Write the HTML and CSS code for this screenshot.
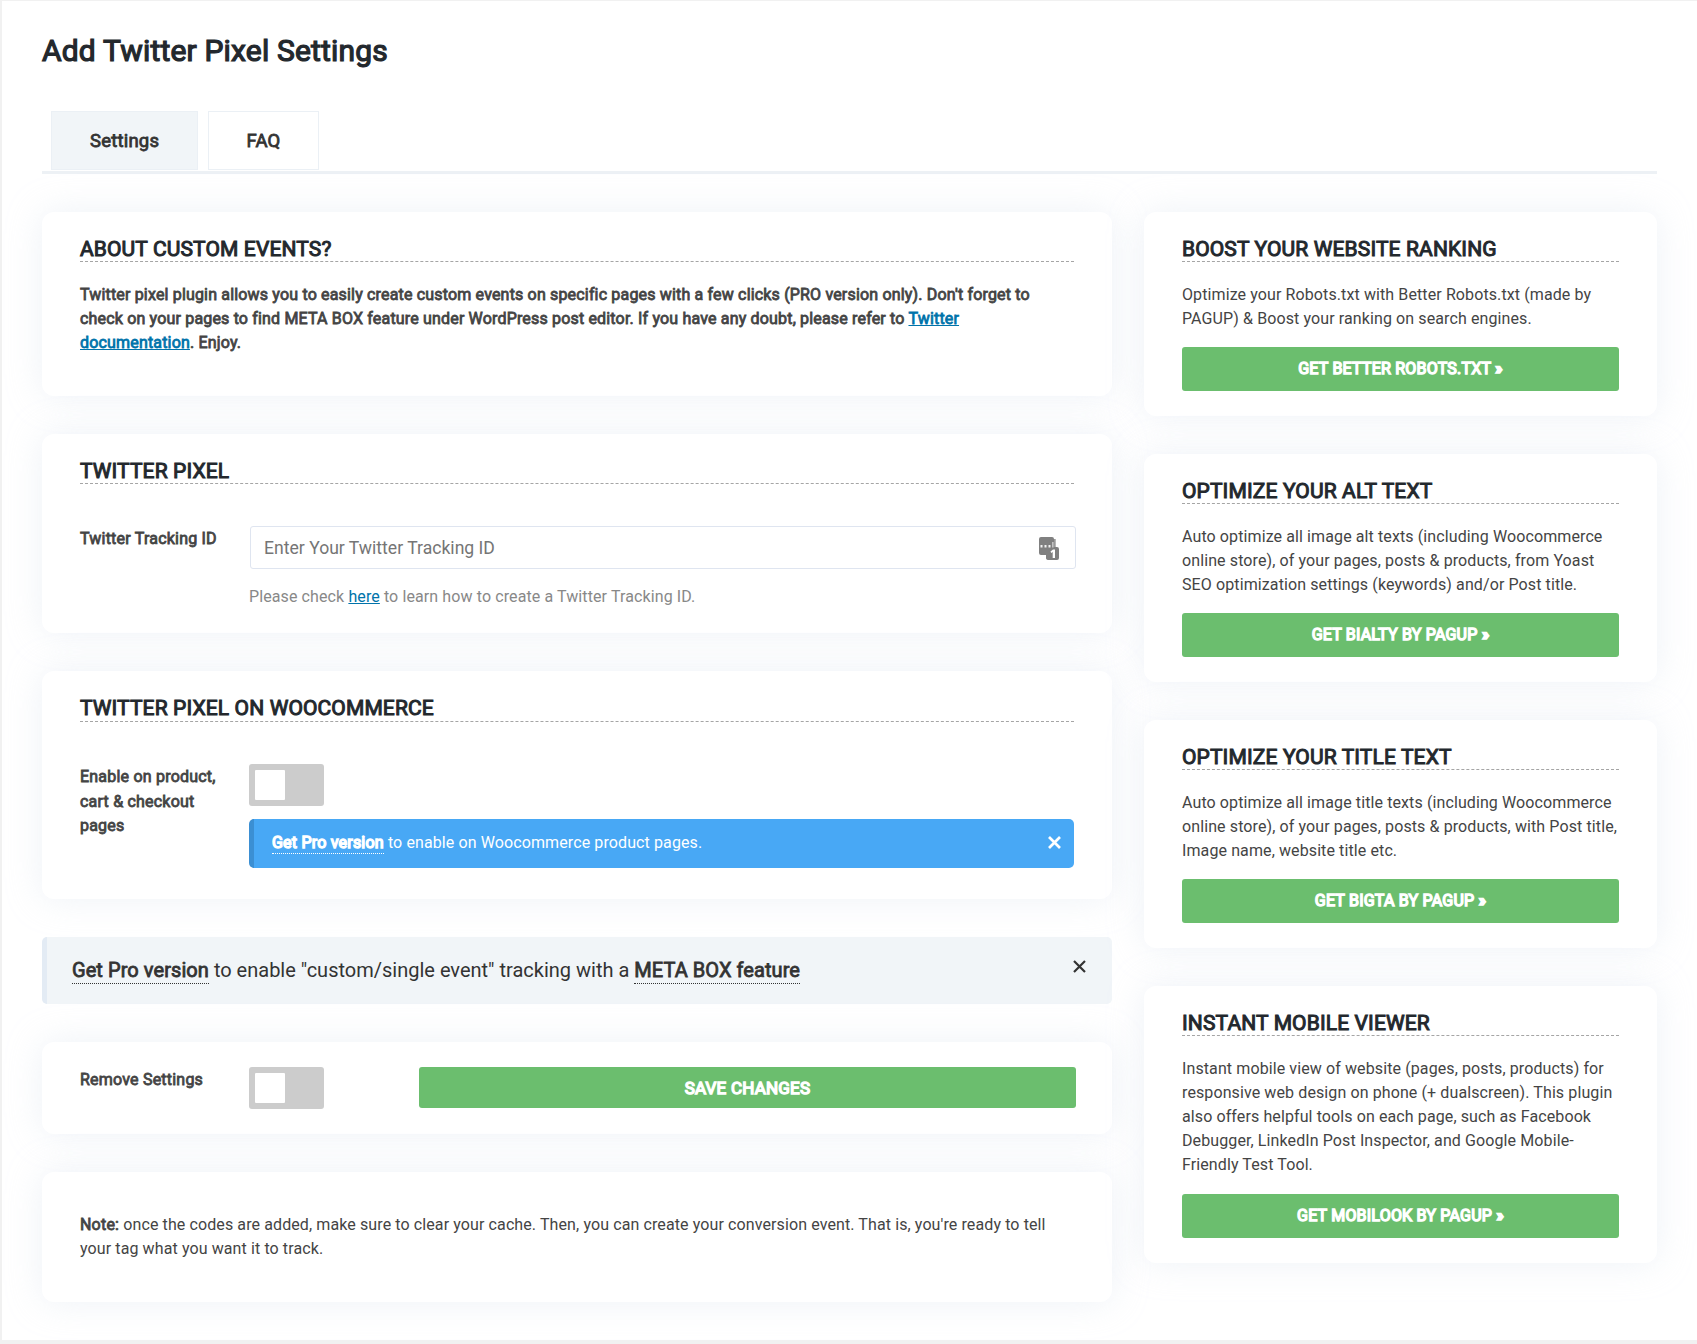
FILE: index.html
```html
<!DOCTYPE html>
<html lang="en">
<head>
<meta charset="utf-8">
<title>Add Twitter Pixel Settings</title>
<link rel="stylesheet" href="styles.css">
</head>
<body>
<div class="page">
  <h1 class="title bold">Add Twitter Pixel Settings</h1>
  <nav class="tabs">
    <a class="tab tab-active bold">Settings</a>
    <a class="tab tab-faq bold">FAQ</a>
  </nav>
  <div class="layout">
    <main class="main">
      <section class="card card-about">
        <h2 class="heading bold">About custom events?</h2>
        <p class="text text-about bold">Twitter pixel plugin allows you to easily create custom events on specific pages with a few clicks (PRO version only). Don't forget to check on your pages to find META BOX feature under WordPress post editor. If you have any doubt, please refer to <a class="link">Twitter documentation</a>. Enjoy.</p>
      </section>

      <section class="card card-pixel">
        <h2 class="heading bold">Twitter Pixel</h2>
        <div class="row row-pixel">
          <label class="label bold">Twitter Tracking ID</label>
          <div class="field">
            <div class="input">
              <span class="placeholder">Enter Your Twitter Tracking ID</span>
              <svg class="manager" width="20" height="24" viewBox="0 0 20 24">
                <path d="M2 0H13Q15 0 15 2V10H18Q20 10 20 12V21Q20 23 18 23H10Q7 23 7 21V18H2Q0 18 0 16V2Q0 0 2 0Z" fill="#808080"/>
                <path d="M1.500 8h2v2.500h-2zM5.500 8h2v2.500h-2zM9.500 8h2v2.500h-2z" fill="#f2f2f2"/>
                <path d="M13.200 5h1.300v5.500h-1.300z" fill="#d5d5d5"/>
                <path d="M15 2h1.700v8h-1.700z" fill="#999"/>
                <path d="M11.500 14.500L14 12.500H16V21H13.700V15L12.200 16Z" fill="#fff"/>
              </svg>
            </div>
            <p class="help">Please check <a class="link">here</a> to learn how to create a Twitter Tracking ID.</p>
          </div>
        </div>
      </section>

      <section class="card card-woo">
        <h2 class="heading bold">Twitter Pixel on Woocommerce</h2>
        <div class="row row-woo">
          <label class="label label-wrap bold">Enable on product, cart &amp; checkout pages</label>
          <div class="field">
            <span class="toggle"><span class="knob"></span></span>
            <div class="alert">
              <span><a class="pro heavy">Get Pro version</a> to enable on Woocommerce product pages.</span>
              <svg class="close" width="13" height="13" viewBox="0 0 13 13"><path d="M1 1L12 12M12 1L1 12" stroke="#fff" stroke-width="2.700"/></svg>
            </div>
          </div>
        </div>
      </section>

      <div class="notice">
        <span><a class="pro bold">Get Pro version</a> to enable "custom/single event" tracking with a <a class="pro bold">META BOX feature</a></span>
        <svg class="close-dark" width="13" height="13" viewBox="0 0 13 13"><path d="M1 1L12 12M12 1L1 12" stroke="#333" stroke-width="2.200"/></svg>
      </div>

      <section class="card card-save">
        <label class="label bold">Remove Settings</label>
        <span class="toggle"><span class="knob"></span></span>
        <button class="button save heavy">Save Changes</button>
      </section>

      <section class="card card-note">
        <p class="text"><b class="bold">Note:</b> once the codes are added, make sure to clear your cache. Then, you can create your conversion event. That is, you're ready to tell your tag what you want it to track.</p>
      </section>
    </main>

    <aside class="side">
      <section class="card">
        <h2 class="heading bold">Boost your website ranking</h2>
        <p class="text">Optimize your Robots.txt with Better Robots.txt (made by PAGUP) &amp; Boost your ranking on search engines.</p>
        <a class="button heavy">Get Better Robots.txt »</a>
      </section>
      <section class="card">
        <h2 class="heading bold">Optimize your alt text</h2>
        <p class="text">Auto optimize all image alt texts (including Woocommerce online store), of your pages, posts &amp; products, from Yoast SEO optimization settings (keywords) and/or Post title.</p>
        <a class="button heavy">Get Bialty by Pagup »</a>
      </section>
      <section class="card">
        <h2 class="heading bold">Optimize your title text</h2>
        <p class="text">Auto optimize all image title texts (including Woocommerce online store), of your pages, posts &amp; products, with Post title, Image name, website title etc.</p>
        <a class="button heavy">Get Bigta by Pagup »</a>
      </section>
      <section class="card">
        <h2 class="heading bold">Instant mobile viewer</h2>
        <p class="text">Instant mobile view of website (pages, posts, products) for responsive web design on phone (+ dualscreen). This plugin also offers helpful tools on each page, such as Facebook Debugger, LinkedIn Post Inspector, and Google Mobile-Friendly Test Tool.</p>
        <a class="button button-low heavy">Get Mobilook by Pagup »</a>
      </section>
    </aside>
  </div>
</div>
</body>
</html>
```
FILE: styles.css
```css
* { box-sizing: border-box; }
body { margin: 0; background: #f1f1f1; font: 400 16px/24px Roboto, sans-serif; letter-spacing: 0.105px; color: #444; }
h1, h2, p { margin: 0; font-weight: 400; }

/* Emboldened regular weight: keeps the regular advance widths */
.bold { font-weight: 400; letter-spacing: 0.210px; -webkit-text-stroke: 0.8px currentColor; }
.heavy { font-weight: 400; letter-spacing: 0.210px; -webkit-text-stroke: 1.4px currentColor; }

.page { height: 1339px; margin: 1px 0 4px 2px; padding: 0 40px; background: #fff; overflow: hidden; }
.title { margin-top: 30px; font-size: 30px; line-height: 40px; color: #23282d; }
.title.bold { letter-spacing: 0.180px; -webkit-text-stroke-width: 1.2px; }

.tabs { display: flex; gap: 10px; height: 63px; margin-top: 40px; padding-left: 9px; border-bottom: 3px solid #edf1f5; color: #333; }
.tab { height: 59px; padding: 0 38px; border: 1px solid #ebf0f5; font-size: 18.500px; line-height: 58px; }
.tab-active { background: #f1f5f8; }
.tab-faq { padding: 0 37.300px; }

.layout { display: flex; gap: 32px; margin-top: 38px; align-items: flex-start; }
.main, .side { display: flex; flex-direction: column; gap: 38px; }
.main { width: 1070px; }
.side { width: 513px; }
.card { padding: 25px 38px; border-radius: 12px; background: #fff; box-shadow: 0 0 35px rgba(210, 220, 235, 0.38); }
.heading { height: 25px; border-bottom: 1px dashed #a5a5a5; font-size: 21px; line-height: 24px; color: #23282d; text-transform: uppercase; }
.heading.bold { letter-spacing: 0.130px; -webkit-text-stroke-width: 1px; }
.text { margin-top: 21px; }
.text-about { letter-spacing: 0.170px; }
.link { color: #0073aa; text-decoration: underline; }
.label { width: 169px; flex: none; padding-top: 1px; color: #444; }
.label-wrap { padding-right: 25px; line-height: 24.500px; }

.card-about { height: 184px; }
.card-pixel { height: 199px; }
.card-woo { height: 228px; }
.card-woo .heading { height: 26px; }
.row { display: flex; }
.row-pixel { margin-top: 42px; }
.row-woo { margin-top: 42px; }
.field { flex: 1; }
.input { display: flex; align-items: center; justify-content: space-between; height: 43px; margin: 0 -2px 0 1px; padding: 0 16px 0 13px; border: 1px solid #dfe5f0; border-radius: 3px; }
.placeholder { font-size: 17.600px; letter-spacing: 0; color: #757575; }
.manager { margin-top: 2px; }
.help { margin-top: 16px; color: #888; }

.toggle { display: block; width: 75px; height: 42px; padding: 6px; border-radius: 3px; background: #ccc; flex: none; }
.knob { display: block; width: 30px; height: 30px; border-radius: 1px; background: #fff; }
.alert { display: flex; justify-content: space-between; height: 49px; margin-top: 13px; padding: 12px 13px 0 18px; border-left: 5px solid #3b8fd3; border-radius: 5px; background: #48a8f5; color: #fff; }
.pro { display: inline-block; border-bottom: 1px dotted currentColor; line-height: 21px; }
.close { margin-top: 5px; }

.notice { display: flex; justify-content: space-between; height: 67px; padding: 20px 26px 0 25px; border-left: 5px solid #e3ebf4; border-radius: 5px; background: #f1f5f8; font-size: 20px; line-height: 26px; letter-spacing: 0; color: #333; }
.notice .pro { line-height: 26px; letter-spacing: 0.070px; }
.close-dark { margin-top: 3px; }

.card-save { display: flex; height: 92px; padding-right: 36px; }
.button { display: block; height: 44px; margin-top: 16px; border: 0; border-radius: 3px; background: #6bbe6e; color: #fff; font: 400 16px/44px Roboto, sans-serif; text-align: center; text-transform: uppercase; }
.button-low { margin-top: 17px; }
.save { flex: 1; height: 41px; margin: 0 0 0 95px; font-size: 17px; line-height: 42px; padding: 0; }
.card-note { height: 130px; padding-top: 20px; }
```
